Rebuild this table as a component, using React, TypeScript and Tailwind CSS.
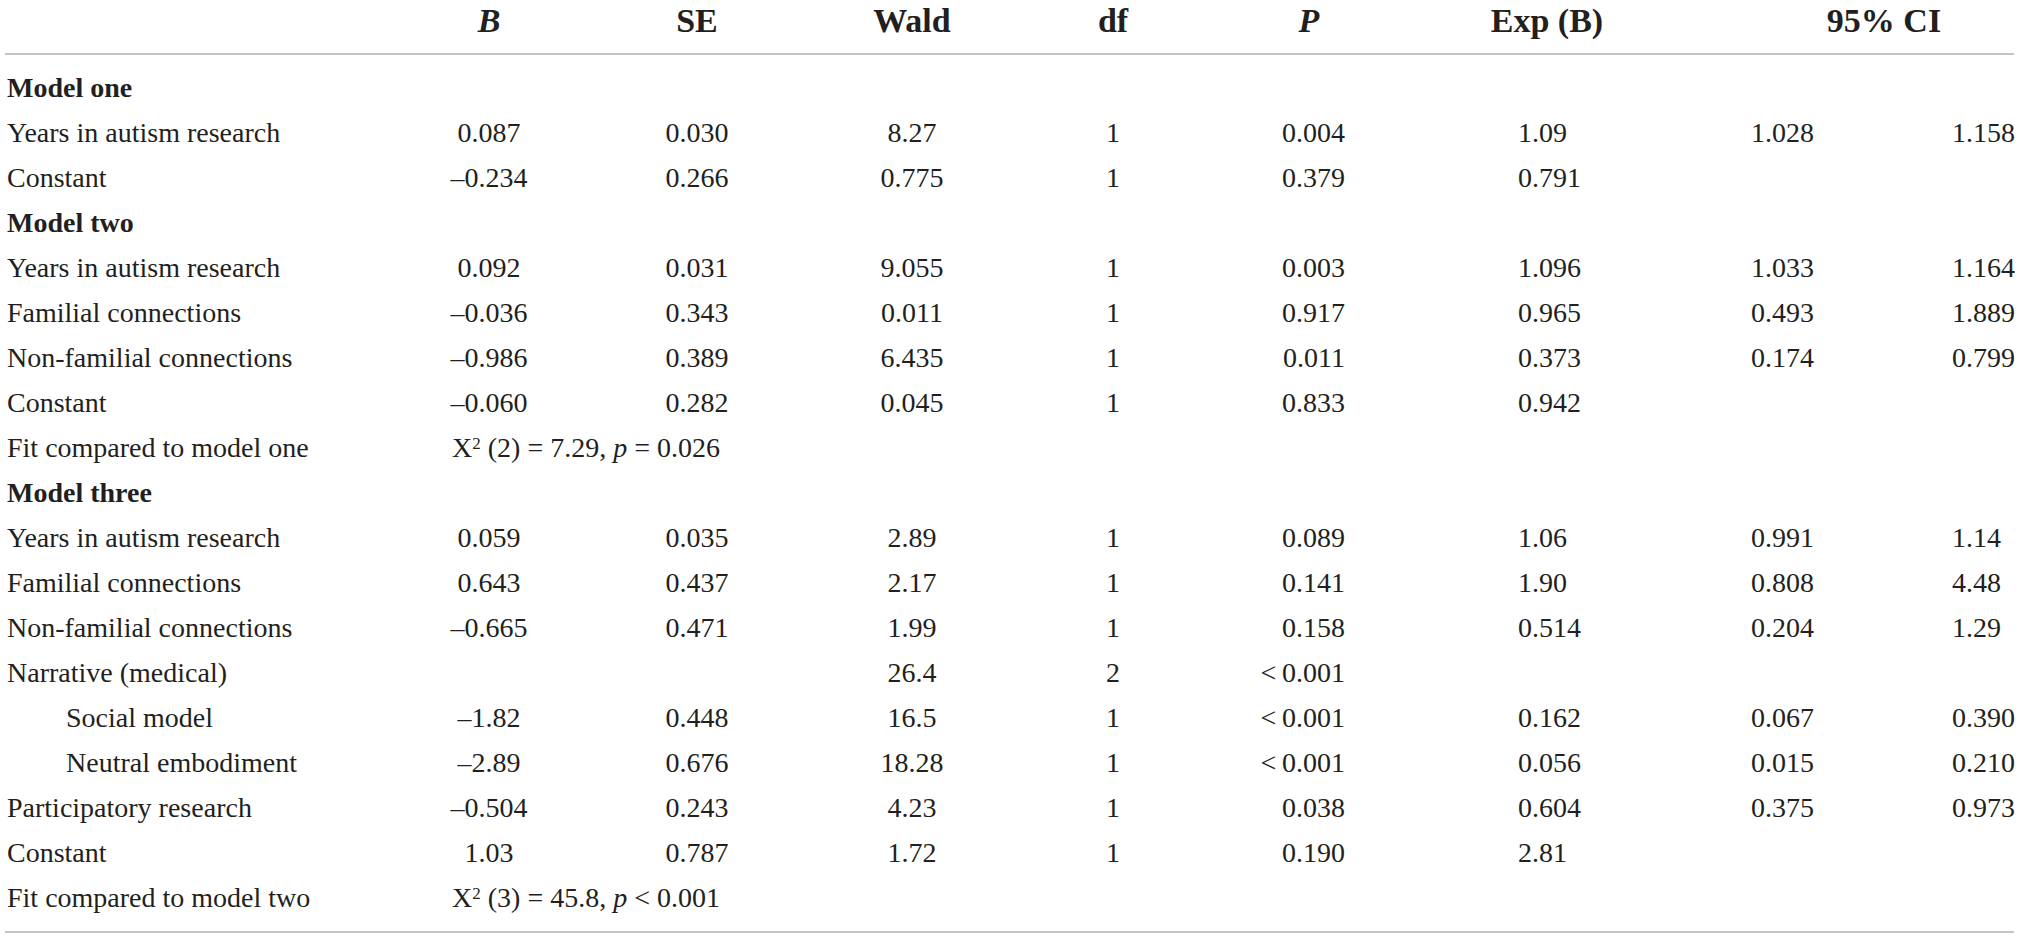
import type { ReactNode } from 'react'

type Row =
  | { kind: 'section'; label: string }
  | { kind: 'data'; label: string; indent?: boolean; cells: string[] }
  | { kind: 'fit'; label: string; stat: ReactNode }

const GRID =
  'grid grid-cols-[385px_198px_218px_212px_190px_202px_274px_267px_63px]'

const rows: Row[] = [
  { kind: 'section', label: 'Model one' },
  { kind: 'data', label: 'Years in autism research', cells: ['0.087', '0.030', '8.27', '1', '0.004', '1.09', '1.028', '1.158'] },
  { kind: 'data', label: 'Constant', cells: ['–0.234', '0.266', '0.775', '1', '0.379', '0.791', '', ''] },
  { kind: 'section', label: 'Model two' },
  { kind: 'data', label: 'Years in autism research', cells: ['0.092', '0.031', '9.055', '1', '0.003', '1.096', '1.033', '1.164'] },
  { kind: 'data', label: 'Familial connections', cells: ['–0.036', '0.343', '0.011', '1', '0.917', '0.965', '0.493', '1.889'] },
  { kind: 'data', label: 'Non-familial connections', cells: ['–0.986', '0.389', '6.435', '1', '0.011', '0.373', '0.174', '0.799'] },
  { kind: 'data', label: 'Constant', cells: ['–0.060', '0.282', '0.045', '1', '0.833', '0.942', '', ''] },
  {
    kind: 'fit',
    label: 'Fit compared to model one',
    stat: (
      <>
        X<sup className="text-[17px]">2</sup> (2) = 7.29, <i>p</i> = 0.026
      </>
    ),
  },
  { kind: 'section', label: 'Model three' },
  { kind: 'data', label: 'Years in autism research', cells: ['0.059', '0.035', '2.89', '1', '0.089', '1.06', '0.991', '1.14'] },
  { kind: 'data', label: 'Familial connections', cells: ['0.643', '0.437', '2.17', '1', '0.141', '1.90', '0.808', '4.48'] },
  { kind: 'data', label: 'Non-familial connections', cells: ['–0.665', '0.471', '1.99', '1', '0.158', '0.514', '0.204', '1.29'] },
  { kind: 'data', label: 'Narrative (medical)', cells: ['', '', '26.4', '2', '<\u20090.001', '', '', ''] },
  { kind: 'data', label: 'Social model', indent: true, cells: ['–1.82', '0.448', '16.5', '1', '<\u20090.001', '0.162', '0.067', '0.390'] },
  { kind: 'data', label: 'Neutral embodiment', indent: true, cells: ['–2.89', '0.676', '18.28', '1', '<\u20090.001', '0.056', '0.015', '0.210'] },
  { kind: 'data', label: 'Participatory research', cells: ['–0.504', '0.243', '4.23', '1', '0.038', '0.604', '0.375', '0.973'] },
  { kind: 'data', label: 'Constant', cells: ['1.03', '0.787', '1.72', '1', '0.190', '2.81', '', ''] },
  {
    kind: 'fit',
    label: 'Fit compared to model two',
    stat: (
      <>
        X<sup className="text-[17px]">2</sup> (3) = 45.8, <i>p</i> &lt; 0.001
      </>
    ),
  },
]

// per-column alignment of the value cells (B, SE, Wald, df, P, Exp, CI low, CI high)
const cellClass = [
  'text-center',
  'text-center',
  'text-center',
  'text-center',
  'text-right pr-[65px]',
  'text-left pl-[108px]',
  'text-left pl-[67px]',
  'text-left pl-[1px]',
]

function Header() {
  return (
    <div className={`${GRID} h-[53px] pt-[2px] text-[34px] font-bold leading-[38px]`}>
      <div />
      <div className="text-center italic">B</div>
      <div className="text-center">SE</div>
      <div className="text-center">Wald</div>
      <div className="text-center">df</div>
      <div className="text-center italic">P</div>
      <div className="text-center">Exp (B)</div>
      <div className="col-span-2 pl-[70px] text-center">95% CI</div>
    </div>
  )
}

function TableRow({ row }: { row: Row }) {
  if (row.kind === 'section') {
    return (
      <div className={`${GRID} h-[45px] leading-[45px]`}>
        <div className="pl-[2px] font-bold">{row.label}</div>
      </div>
    )
  }

  if (row.kind === 'fit') {
    return (
      <div className={`${GRID} h-[45px] leading-[45px]`}>
        <div className="pl-[2px]">{row.label}</div>
        <div className="col-span-5 whitespace-nowrap pl-[62px]">{row.stat}</div>
      </div>
    )
  }

  return (
    <div className={`${GRID} h-[45px] leading-[45px]`}>
      <div className={row.indent ? 'pl-[61px]' : 'pl-[2px]'}>{row.label}</div>
      {row.cells.map((value, i) => (
        <div key={i} className={cellClass[i]}>
          {value}
        </div>
      ))}
    </div>
  )
}

export default function App() {
  return (
    <div className="min-h-screen bg-white pl-[5px] font-['Liberation_Serif',serif] text-[28px] text-[#231f20]">
      <div className="w-[2009px]">
        <Header />
        <div className="h-[2px] bg-[#c4c4c4]" />
        <div className="pt-[10px] pb-[11px]">
          {rows.map((row, i) => (
            <TableRow key={i} row={row} />
          ))}
        </div>
        <div className="h-[2px] bg-[#c4c4c4]" />
      </div>
    </div>
  )
}
